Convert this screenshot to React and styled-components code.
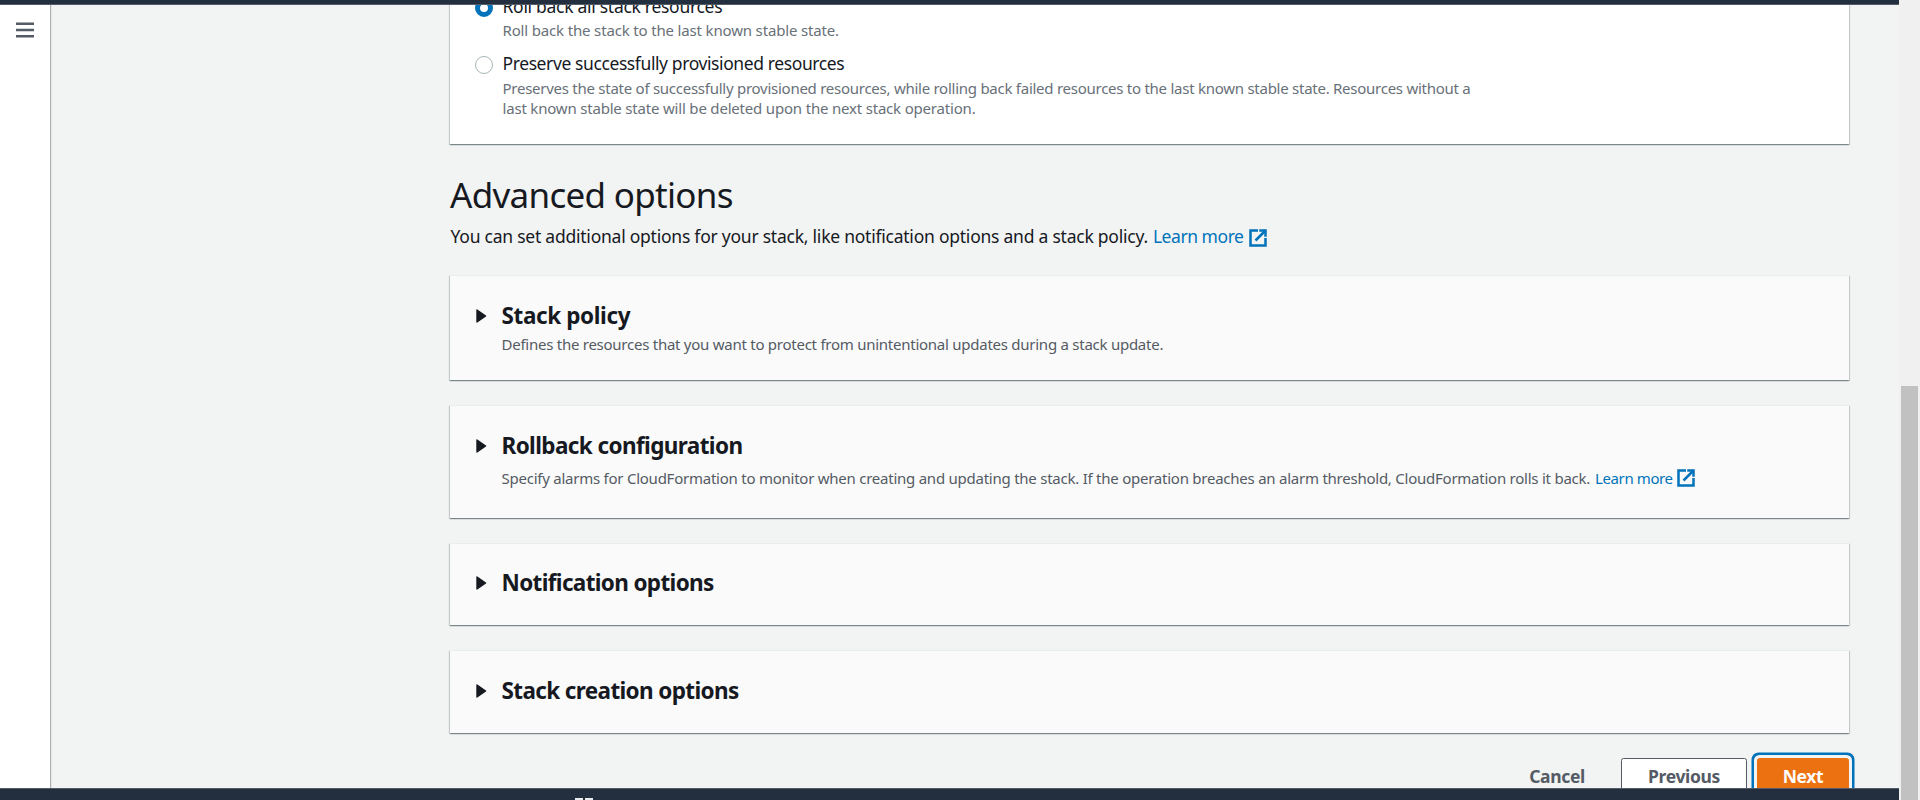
import React from "react";
import styled, { createGlobalStyle } from "styled-components";

const ink = "#16191f";
const muted = "#687078";
const slate = "#545b64";
const navy = "#232f3e";
const blue = "#0073bb";

const GlobalStyle = createGlobalStyle`
  *, *::before, *::after { box-sizing: border-box; }
  html, body { margin: 0; padding: 0; overflow: hidden; }
  body {
    font-family: "Noto Sans", "Open Sans", sans-serif;
    color: ${ink};
    background: #f2f3f3;
  }
`;

const Window = styled.div`
  display: flex;
  width: 1920px;
  height: 800px;
  overflow: hidden;
`;

const Page = styled.div`
  display: flex;
  flex-direction: column;
  flex: 1;
  min-width: 0;
`;

const TopBar = styled.header`
  flex: none;
  height: 5px;
  background: ${navy};
  border-bottom: 1px solid ${slate};
`;

const Body = styled.div`
  display: flex;
  flex: 1;
  min-height: 0;
  overflow: hidden;
`;

const SideRail = styled.nav`
  flex: none;
  width: 50px;
  padding: 16px 0 0 16px;
  background: #fff;
  box-shadow: 1px 0 1px 0 rgba(0, 28, 36, 0.3);
`;

const MenuIcon = styled.svg`
  display: block;
`;

const Main = styled.main`
  flex: 1;
  padding: 0 50px 0 400px;
  overflow: hidden;
`;

const Card = styled.section`
  height: ${(p) => p.$height}px;
  margin-bottom: 25px;
  padding: ${(p) => (p.$tight ? 25 : 26)}px 26px 0 26px;
  background: #fafafa;
  border-top: 1px solid #eaeded;
  box-shadow: 0 1px 1px 0 rgba(0, 28, 36, 0.3),
    1px 1px 1px 0 rgba(0, 28, 36, 0.15),
    -1px 1px 1px 0 rgba(0, 28, 36, 0.15);
`;

const OptionsCard = styled(Card)`
  height: 157px;
  margin: -18px 0 27px;
  padding: 4px 25px 0;
  background: #fff;
`;

const Option = styled.div`
  display: grid;
  grid-template-columns: 18px 1fr;
  column-gap: 9.5px;
  margin-bottom: 9px;
`;

const Radio = styled.span`
  width: 18px;
  height: 18px;
  margin-top: 7px;
  border-radius: 50%;
  background: #fff;
  border: ${(p) => (p.$checked ? `5.5px solid ${blue}` : "1.25px solid #aab7b8")};
`;

const OptionLabel = styled.div`
  font-size: 17.5px;
  line-height: 28px;
  letter-spacing: ${(p) => p.$tracking}px;
  white-space: nowrap;
`;

const OptionText = styled.div`
  font-size: 15px;
  line-height: 20px;
  letter-spacing: ${(p) => p.$tracking}px;
  margin-top: ${(p) => p.$gap || 0}px;
  color: ${muted};
  white-space: nowrap;
`;

const Title = styled.h1`
  margin: 0;
  padding-top: 2px;
  font-size: 35px;
  font-weight: 400;
  line-height: 44px;
  letter-spacing: -0.7px;
`;

const Lead = styled.p`
  display: flex;
  margin: 5px 0 25px 0.5px;
  font-size: 17.5px;
  line-height: 28px;
  letter-spacing: -0.236px;
  white-space: nowrap;
`;

const Link = styled.a`
  display: inline-flex;
  margin-left: 5px;
  color: ${blue};
  letter-spacing: ${(p) => p.$tracking}px;
`;

const LinkIcon = styled.svg`
  flex: none;
  margin: ${(p) => p.$top}px 0 0 ${(p) => p.$left}px;
`;

const Heading = styled.h2`
  display: flex;
  margin: 0;
  font-size: 22.5px;
  font-weight: 700;
  line-height: 28px;
  letter-spacing: ${(p) => p.$tracking}px;
  white-space: nowrap;
`;

const Caret = styled.svg`
  flex: none;
  margin: 7px 14.5px 0 0;
`;

const Description = styled.div`
  display: flex;
  margin: ${(p) => p.$gap}px 0 0 25.5px;
  font-size: 15px;
  line-height: 20px;
  letter-spacing: ${(p) => p.$tracking}px;
  color: ${slate};
  white-space: nowrap;
`;

const Actions = styled.div`
  display: flex;
  justify-content: flex-end;
`;

const Button = styled.button`
  flex: none;
  width: ${(p) => p.$width}px;
  height: 36px;
  padding: 0;
  font: 700 17.5px/34px "Noto Sans", "Open Sans", sans-serif;
  letter-spacing: -0.35px;
  color: ${slate};
  background: transparent;
  border: 1px solid transparent;
  border-radius: 2.5px;
`;

const OutlineButton = styled(Button)`
  margin: 0 10px 0 9px;
  background: #fff;
  border-color: ${slate};
`;

const PrimaryButton = styled(Button)`
  color: #fff;
  background: #ec7211;
  border-color: #ec7211;
  box-shadow: 0 0 0 3px #f2f3f3, 0 0 0 5.5px ${blue};
`;

const BottomBar = styled.footer`
  flex: none;
  height: 12px;
  padding: 9px 0 0 575px;
  display: flex;
  gap: 2px;
  background: ${navy};
  border-top: 1px solid ${slate};
`;

const Tick = styled.span`
  width: 8px;
  height: 2px;
  background: #e9ebed;
`;

const ScrollTrack = styled.div`
  flex: none;
  width: 21px;
  padding: 386px 2px 0 2px;
  background: #f0f0f0;
`;

const ScrollThumb = styled.div`
  width: 17px;
  height: 414px;
  background: #c1c1c1;
`;

function External({ top, left }) {
  return (
    <LinkIcon $top={top} $left={left} width="20" height="20" viewBox="0 0 16 16" fill="none" stroke={blue} strokeWidth="2">
      <path strokeLinecap="square" d="M10 2h4v4" />
      <path d="M6 10l8-8" />
      <path strokeLinecap="square" d="M14 9.048V14H2V2h5" />
    </LinkIcon>
  );
}

function Section({ title, tracking, height, tight, children }) {
  return (
    <Card $height={height} $tight={tight}>
      <Heading $tracking={tracking}>
        <Caret width="11" height="14" viewBox="0 0 11 14">
          <path d="M1 1v12L9.6 7z" fill={ink} stroke={ink} strokeWidth="1.4" strokeLinejoin="round" />
        </Caret>
        {title}
      </Heading>
      {children}
    </Card>
  );
}

export default function App() {
  return (
    <>
      <GlobalStyle />
      <Window>
        <Page>
          <TopBar />
          <Body>
            <SideRail>
              <MenuIcon width="18" height="18" viewBox="0 0 18 18" stroke={slate} strokeWidth="2.4">
                <path d="M0 2.8h18M0 9h18M0 15.2h18" />
              </MenuIcon>
            </SideRail>
            <Main>
              <OptionsCard>
                <Option>
                  <Radio $checked />
                  <div>
                    <OptionLabel $tracking={-0.29}>Roll back all stack resources</OptionLabel>
                    <OptionText $tracking={-0.16}>Roll back the stack to the last known stable state.</OptionText>
                  </div>
                </Option>
                <Option>
                  <Radio />
                  <div>
                    <OptionLabel $tracking={-0.4}>Preserve successfully provisioned resources</OptionLabel>
                    <OptionText $gap={1} $tracking={-0.26}>
                      Preserves the state of successfully provisioned resources, while rolling back failed resources to the last known stable state. Resources without a
                    </OptionText>
                    <OptionText $tracking={-0.19}>last known stable state will be deleted upon the next stack operation.</OptionText>
                  </div>
                </Option>
              </OptionsCard>

              <Title>Advanced options</Title>
              <Lead>
                You can set additional options for your stack, like notification options and a stack policy.
                <Link $tracking={-0.45}>
                  Learn more
                  <External top={6} left={4.5} />
                </Link>
              </Lead>

              <Section title="Stack policy" tracking={-0.38} height={105}>
                <Description $gap={4} $tracking={-0.255}>
                  Defines the resources that you want to protect from unintentional updates during a stack update.
                </Description>
              </Section>
              <Section title="Rollback configuration" tracking={-0.6} height={113}>
                <Description $gap={8} $tracking={-0.243}>
                  Specify alarms for CloudFormation to monitor when creating and updating the stack. If the operation breaches an alarm threshold, CloudFormation rolls it back.
                  <Link $tracking={-0.4}>
                    Learn more
                    <External top={0} left={3.5} />
                  </Link>
                </Description>
              </Section>
              <Section title="Notification options" tracking={-0.65} height={82} tight />
              <Section title="Stack creation options" tracking={-0.63} height={83} />

              <Actions>
                <Button $width={110}>Cancel</Button>
                <OutlineButton $width={126}>Previous</OutlineButton>
                <PrimaryButton $width={92}>Next</PrimaryButton>
              </Actions>
            </Main>
          </Body>
          <BottomBar>
            <Tick />
            <Tick />
          </BottomBar>
        </Page>
        <ScrollTrack>
          <ScrollThumb />
        </ScrollTrack>
      </Window>
    </>
  );
}
